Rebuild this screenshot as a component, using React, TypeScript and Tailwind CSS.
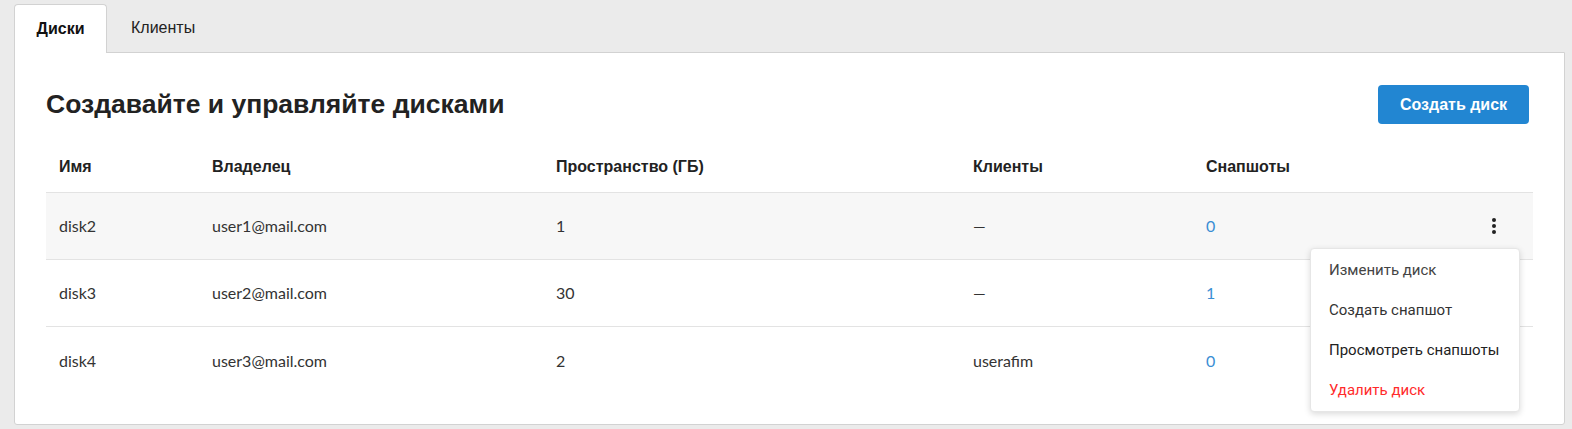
import React from "react";

const rows = [
  { name: "disk2", owner: "user1@mail.com", space: "1", clients: "—", snaps: "0" },
  { name: "disk3", owner: "user2@mail.com", space: "30", clients: "—", snaps: "1" },
  { name: "disk4", owner: "user3@mail.com", space: "2", clients: "userafim", snaps: "0" },
];

const grid = "grid grid-cols-[153px_344px_417px_233px_1fr] items-center";

export default function App() {
  return (
    <div className="w-[1572px] h-[429px] bg-[#ebebeb] pt-[4px] pl-[14px] pr-[7px]" style={{ fontFamily: "'Liberation Sans', Arial, sans-serif" }}>
      <div className="flex h-[48px] items-stretch">
        <div className="w-[93px] bg-white border border-[#d2d2d2] border-b-0 rounded-t-[4px] flex items-center justify-center text-[16px] font-bold text-[#111] relative z-10 -mb-px">
          Диски
        </div>
        <div className="px-[24px] flex items-center text-[16px] text-[#222]">Клиенты</div>
      </div>
      <div className="bg-white border border-[#d2d2d2] rounded-b-[3px] h-[373px] pt-[32px] px-[31px]">
        <div className="flex items-center justify-between h-[39px]">
          <h1 className="text-[26.5px] font-bold text-[#222]">Создавайте и управляйте дисками</h1>
          <button className="w-[151px] h-[39px] bg-[#2286d2] rounded-[4px] text-white text-[16px] font-bold mr-[4px]">Создать диск</button>
        </div>
        <div className="mt-[17px]" style={{ fontFamily: "Lato, 'Liberation Sans', sans-serif" }}>
          <div className={`${grid} h-[52px] border-b border-[#e3e3e3] text-[16px] font-bold text-[#222]`} style={{ fontFamily: "'Liberation Sans', Arial, sans-serif" }}>
            <div className="pl-[13px]">Имя</div>
            <div className="pl-[13px]">Владелец</div>
            <div className="pl-[13px]">Пространство (ГБ)</div>
            <div className="pl-[13px]">Клиенты</div>
            <div className="pl-[13px]">Снапшоты</div>
          </div>
          {rows.map((r, i) => (
            <div
              key={r.name}
              className={`${grid} relative h-[67px] text-[16px] text-[#333] ${i === 0 ? "bg-[#f7f7f7]" : ""} ${i < 2 ? "border-b border-[#e3e3e3]" : ""}`}
            >
              <div className="pl-[13px]">{r.name}</div>
              <div className="pl-[13px]">{r.owner}</div>
              <div className="pl-[13px]">{r.space}</div>
              <div className="pl-[13px]">{r.clients}</div>
              <div className="pl-[13px] flex justify-between items-center">
                <span className="text-[#3a8ed4]">{r.snaps}</span>
                {i === 0 && (
                  <span className="mr-[37px] flex flex-col gap-[2px]">
                    <span className="block w-[4px] h-[4px] rounded-full bg-[#222]" />
                    <span className="block w-[4px] h-[4px] rounded-full bg-[#222]" />
                    <span className="block w-[4px] h-[4px] rounded-full bg-[#222]" />
                  </span>
                )}
              </div>
              {i === 0 && (
                <div
                  className="absolute right-[13px] top-[55px] w-[210px] bg-white rounded-[4px] border border-[#e6e6e6] shadow-[0_2px_6px_rgba(0,0,0,0.15)] py-[1px] z-20 text-[15px]"
                  style={{ fontFamily: "Roboto, 'Liberation Sans', sans-serif" }}
                >
                  <div className="h-10 flex items-center pl-[18px] text-[#444]">Изменить диск</div>
                  <div className="h-10 flex items-center pl-[18px] text-[#333]">Создать снапшот</div>
                  <div className="h-10 flex items-center pl-[18px] text-[#222]">Просмотреть снапшоты</div>
                  <div className="h-10 flex items-center pl-[18px] text-[#ff2b2b]">Удалить диск</div>
                </div>
              )}
            </div>
          ))}
        </div>
      </div>
    </div>
  );
}
